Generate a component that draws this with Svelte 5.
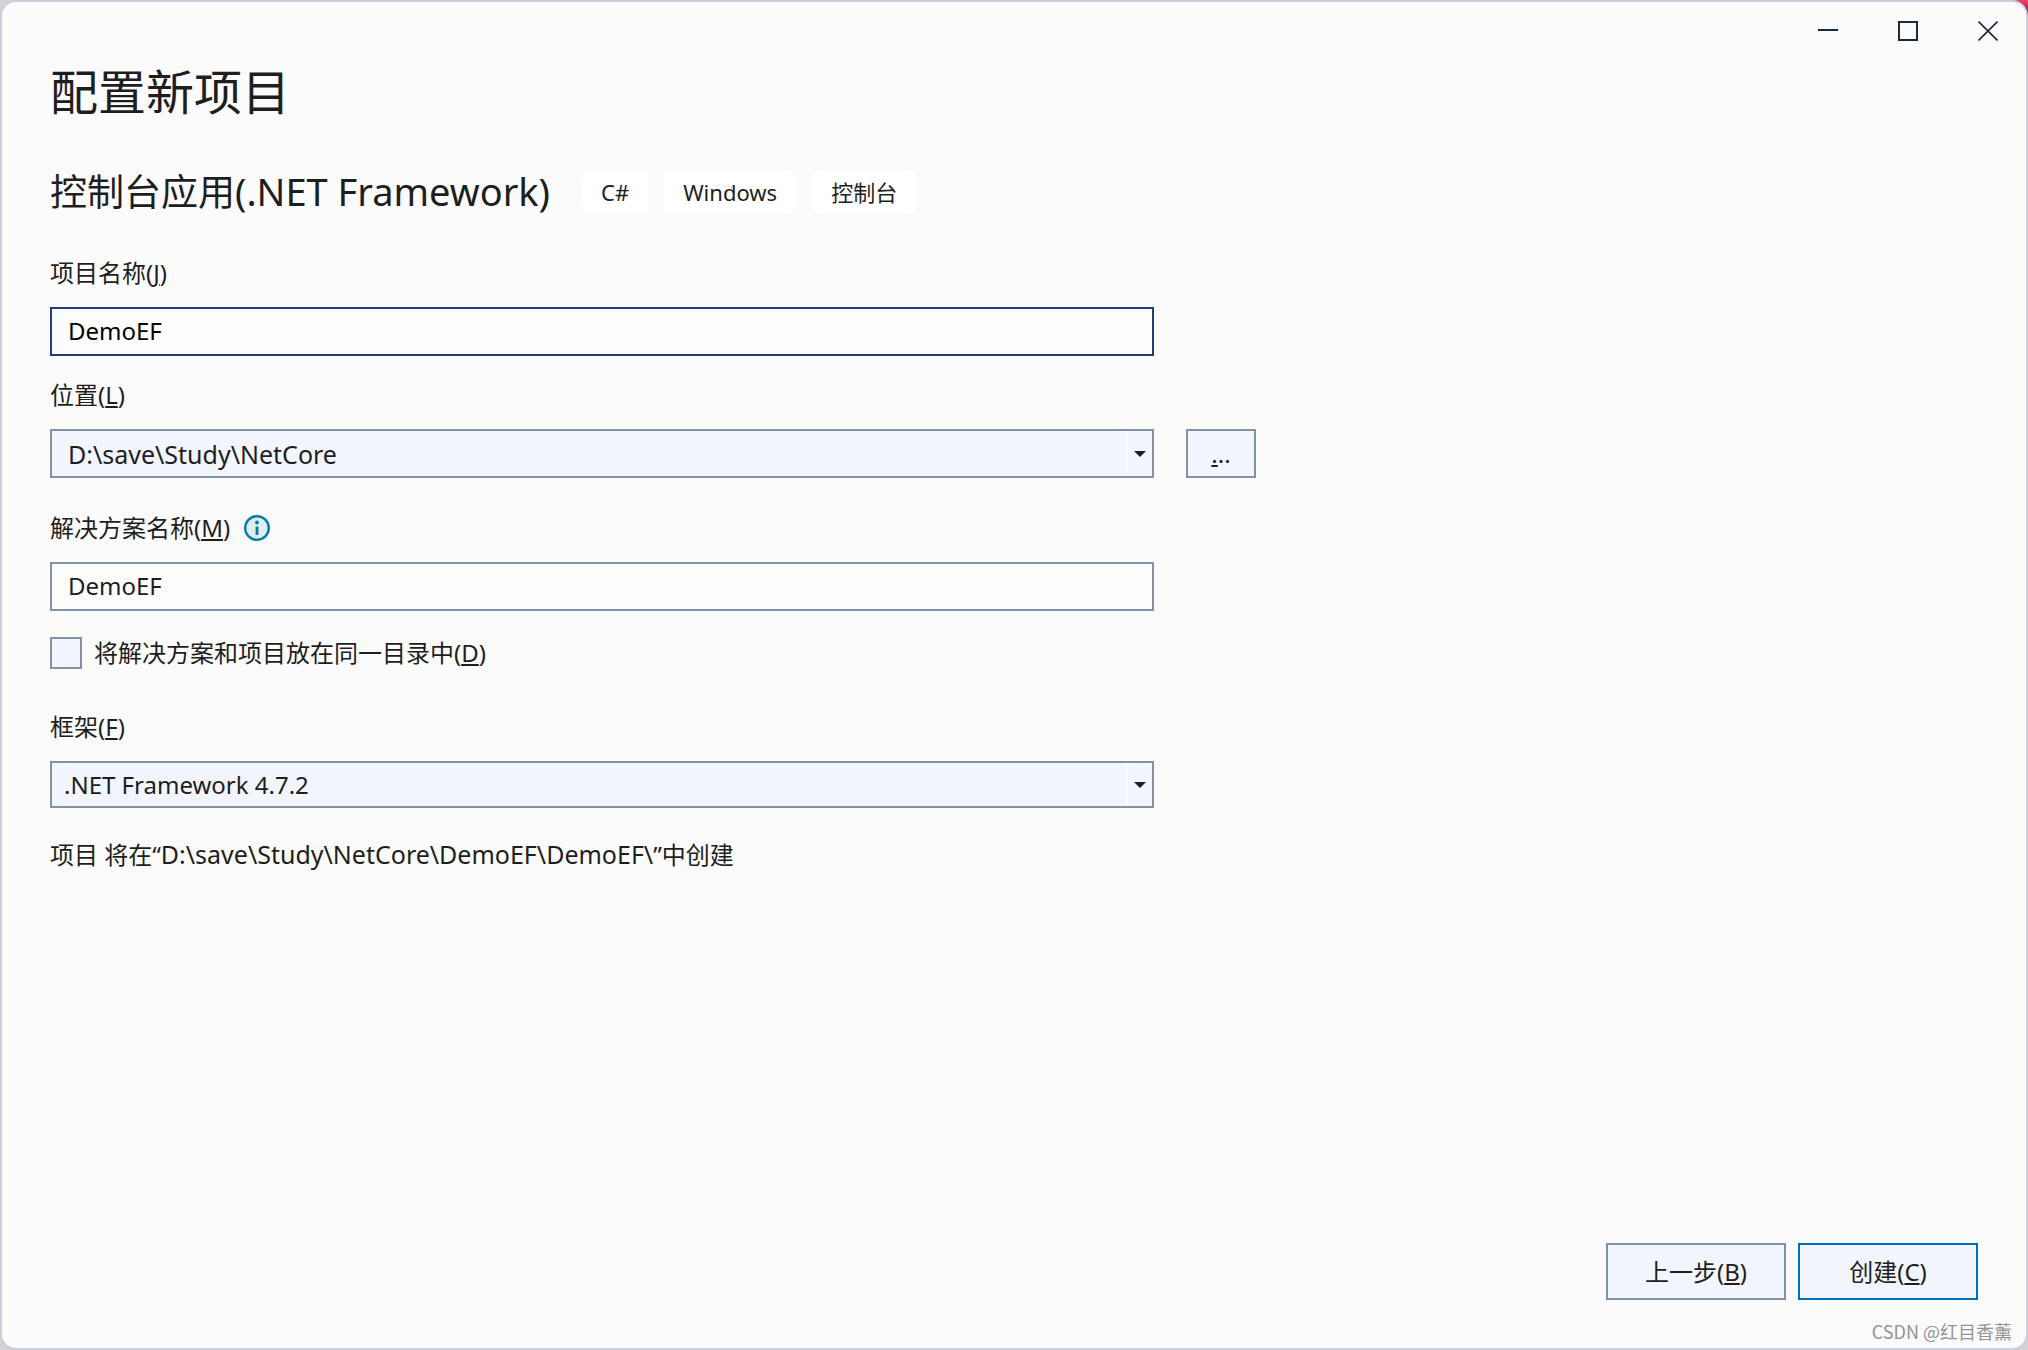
<script lang="ts">
const template = { name: "控制台应用", platform: "(.NET Framework)" }
const tags = ["C#", "Windows", "控制台"]
const locations = ["D:\\save\\Study\\NetCore"]
const frameworks = [".NET Framework 4.7.2"]

let projectName = $state("DemoEF")
let solutionName = $state("DemoEF")
let location = $state(locations[0])
let framework = $state(frameworks[0])
let sameDirectory = $state(false)

// the solution folder is dropped when both share one directory
let target = $derived(
	sameDirectory
		? `${location}\\${projectName}\\`
		: `${location}\\${solutionName}\\${projectName}\\`,
)
</script>

{#snippet arrow()}
	<svg class="arrow" width="12" height="6" viewBox="0 0 12 6" aria-hidden="true">
		<path d="M0 0h12L6 6z" fill="#1e1e1e" />
	</svg>
{/snippet}

<div class="window">
	<header class="titlebar">
		<button aria-label="最小化">
			<svg width="20" height="20" viewBox="0 0 20 20"><path d="M0 9h20" /></svg>
		</button>
		<button aria-label="最大化">
			<svg width="20" height="20" viewBox="0 0 20 20"><path d="M1 1h18v18H1z" /></svg>
		</button>
		<button aria-label="关闭">
			<svg width="20" height="20" viewBox="0 0 20 20"><path class="thin" d="M0.5 0.5l19 19M19.5 0.5l-19 19" /></svg>
		</button>
	</header>

	<main>
		<h1>配置新项目</h1>

		<div class="template">
			<h2>{template.name}<span>{template.platform}</span></h2>
			<ul class="tags">
				{#each tags as tag}
					<li>{tag}</li>
				{/each}
			</ul>
		</div>

		<form id="project" onsubmit={(e) => e.preventDefault()}>
			<div class="field name">
				<label for="projectName">项目名称(<u>J</u>)</label>
				<input id="projectName" class="box active" type="text" bind:value={projectName} />
			</div>

			<div class="field location">
				<label for="location">位置(<u>L</u>)</label>
				<div class="row">
					<div class="combo">
						<select id="location" class="box path" bind:value={location}>
							{#each locations as l}
								<option>{l}</option>
							{/each}
						</select>
						{@render arrow()}
					</div>
					<button class="btn browse" type="button" aria-label="浏览"><u>.</u>..</button>
				</div>
			</div>

			<div class="field solution">
				<div class="labelrow">
					<label for="solutionName">解决方案名称(<u>M</u>)</label>
					<svg width="26" height="26" viewBox="0 0 26 26" aria-hidden="true">
						<circle cx="13" cy="13" r="11.8" fill="#e0ecf0" stroke="#007ea8" stroke-width="2.4" />
						<circle cx="13" cy="7.5" r="1.9" fill="#007ea8" />
						<path d="M11.6 11.5h2.8v8.5h-2.8z" fill="#007ea8" />
					</svg>
				</div>
				<input id="solutionName" class="box" type="text" bind:value={solutionName} />
			</div>

			<div class="check">
				<input id="sameDirectory" type="checkbox" bind:checked={sameDirectory} />
				<label for="sameDirectory">将解决方案和项目放在同一目录中(<u>D</u>)</label>
			</div>

			<div class="field framework">
				<label for="framework">框架(<u>F</u>)</label>
				<div class="combo">
					<select id="framework" class="box" bind:value={framework}>
						{#each frameworks as f}
							<option>{f}</option>
						{/each}
					</select>
					{@render arrow()}
				</div>
			</div>

			<p class="summary">项目 将在“<span class="path">{target}</span>”中创建</p>
		</form>
	</main>

	<footer>
		<button class="btn" type="button">上一步(<u>B</u>)</button>
		<button class="btn primary" type="submit" form="project">创建(<u>C</u>)</button>
	</footer>

	<span class="watermark">CSDN @红目香薰</span>
</div>

<style>
:global(body) {
  margin: 0;
  background: linear-gradient(#f0436a, #a8005a) right top / 16px 16px no-repeat #d2d2d6;
}

.window {
  position: relative;
  box-sizing: border-box;
  min-height: 100vh;
  display: flex;
  flex-direction: column;
  border: 2px solid #cccedb;
  border-radius: 16px;
  background: #fbfbfb;
  color: #1e1e1e;
  font-family: "Noto Sans", "Noto Sans CJK SC", sans-serif;
  font-size: 24px;
  line-height: 32px;
}

.window button,
.window input,
.window select {
  font: inherit;
  color: inherit;
}

.titlebar {
  display: flex;
  justify-content: flex-end;
  gap: 4px;
  height: 58px;
}
.titlebar button {
  display: flex;
  align-items: center;
  justify-content: center;
  width: 76px;
  padding: 0;
  border: none;
  border-radius: 0 14px 0 0;
  background: none;
}
.titlebar button:hover {
  background: #e6e7ed;
}
.titlebar path {
  fill: none;
  stroke: #1b293e;
  stroke-width: 2;
}
.titlebar path.thin {
  stroke-width: 1.6;
}

main {
  flex: 1;
  padding: 0 48px;
}

h1 {
  margin: 0;
  font-size: 48px;
  font-weight: 400;
  line-height: 64px;
}

.template {
  display: flex;
  align-items: center;
  flex-wrap: wrap;
  gap: 32px;
  margin-top: 47px;
}
h2 {
  margin: 0;
  font-size: 37px;
  font-weight: 400;
  line-height: 42px;
}
h2 span {
  font-size: 38px;
  line-height: 32px;
}
.tags {
  display: flex;
  gap: 16px;
  margin: 0;
  padding: 0;
  list-style: none;
}
.tags li {
  padding: 0 19px;
  border-radius: 8px;
  background: #fff;
  font-size: 22px;
  line-height: 42px;
}

.field {
  display: flex;
  flex-direction: column;
  gap: 18px;
  max-width: 1104px;
}
.name {
  margin-top: 44px;
}
.location {
  max-width: 1206px;
  margin-top: 23px;
}
.solution {
  margin-top: 34px;
}
.framework {
  margin-top: 42px;
}

u {
  text-decoration-thickness: 2px;
  text-underline-offset: 2px;
}

.labelrow {
  display: flex;
  align-items: center;
  gap: 14px;
}

.row {
  display: flex;
  gap: 32px;
}

.box {
  box-sizing: border-box;
  width: 100%;
  height: 49px;
  margin: 0;
  padding: 0 16px 2px;
  border: 2px solid #8591a6;
  border-radius: 0;
  background: #fdfdfd;
  outline: none;
}
.box.active {
  border-color: #233c7b;
}
.window .active {
  color: #000;
}
.window .path {
  font-size: 25px;
}

.combo {
  position: relative;
  flex: 1;
  display: flex;
}
.combo select {
  appearance: none;
  padding-bottom: 0;
  background: linear-gradient(#fbfbfb, #fbfbfb) right 24px top / 2px 100% no-repeat #f2f5fd;
}
.framework select {
  height: 47px;
  padding: 0 12px;
}
.arrow {
  position: absolute;
  top: calc(50% - 3px);
  right: 8px;
  pointer-events: none;
}

.btn {
  box-sizing: border-box;
  width: 180px;
  height: 57px;
  padding: 0;
  border: 2px solid #8591a6;
  background: #f2f5fd;
}
.btn:hover {
  background: #e3eafb;
}
.btn.primary {
  border-color: #006cbe;
}
.btn.browse {
  width: 70px;
  height: 49px;
}

.check {
  display: flex;
  align-items: center;
  gap: 12px;
  margin-top: 26px;
}
.check input {
  appearance: none;
  box-sizing: border-box;
  width: 32px;
  height: 32px;
  margin: 0;
  border: 2px solid #8591a6;
  background: #f2f5fd;
}
.check input:checked {
  background: #006cbe;
}

.summary {
  margin: 30px 0 0;
}

footer {
  display: flex;
  justify-content: flex-end;
  gap: 12px;
  padding: 24px 48px 48px;
}

.watermark {
  position: absolute;
  right: 14px;
  bottom: 5px;
  color: #949494;
  font-family: "Noto Sans CJK SC", sans-serif;
  font-size: 18px;
  line-height: 24px;
}
</style>
